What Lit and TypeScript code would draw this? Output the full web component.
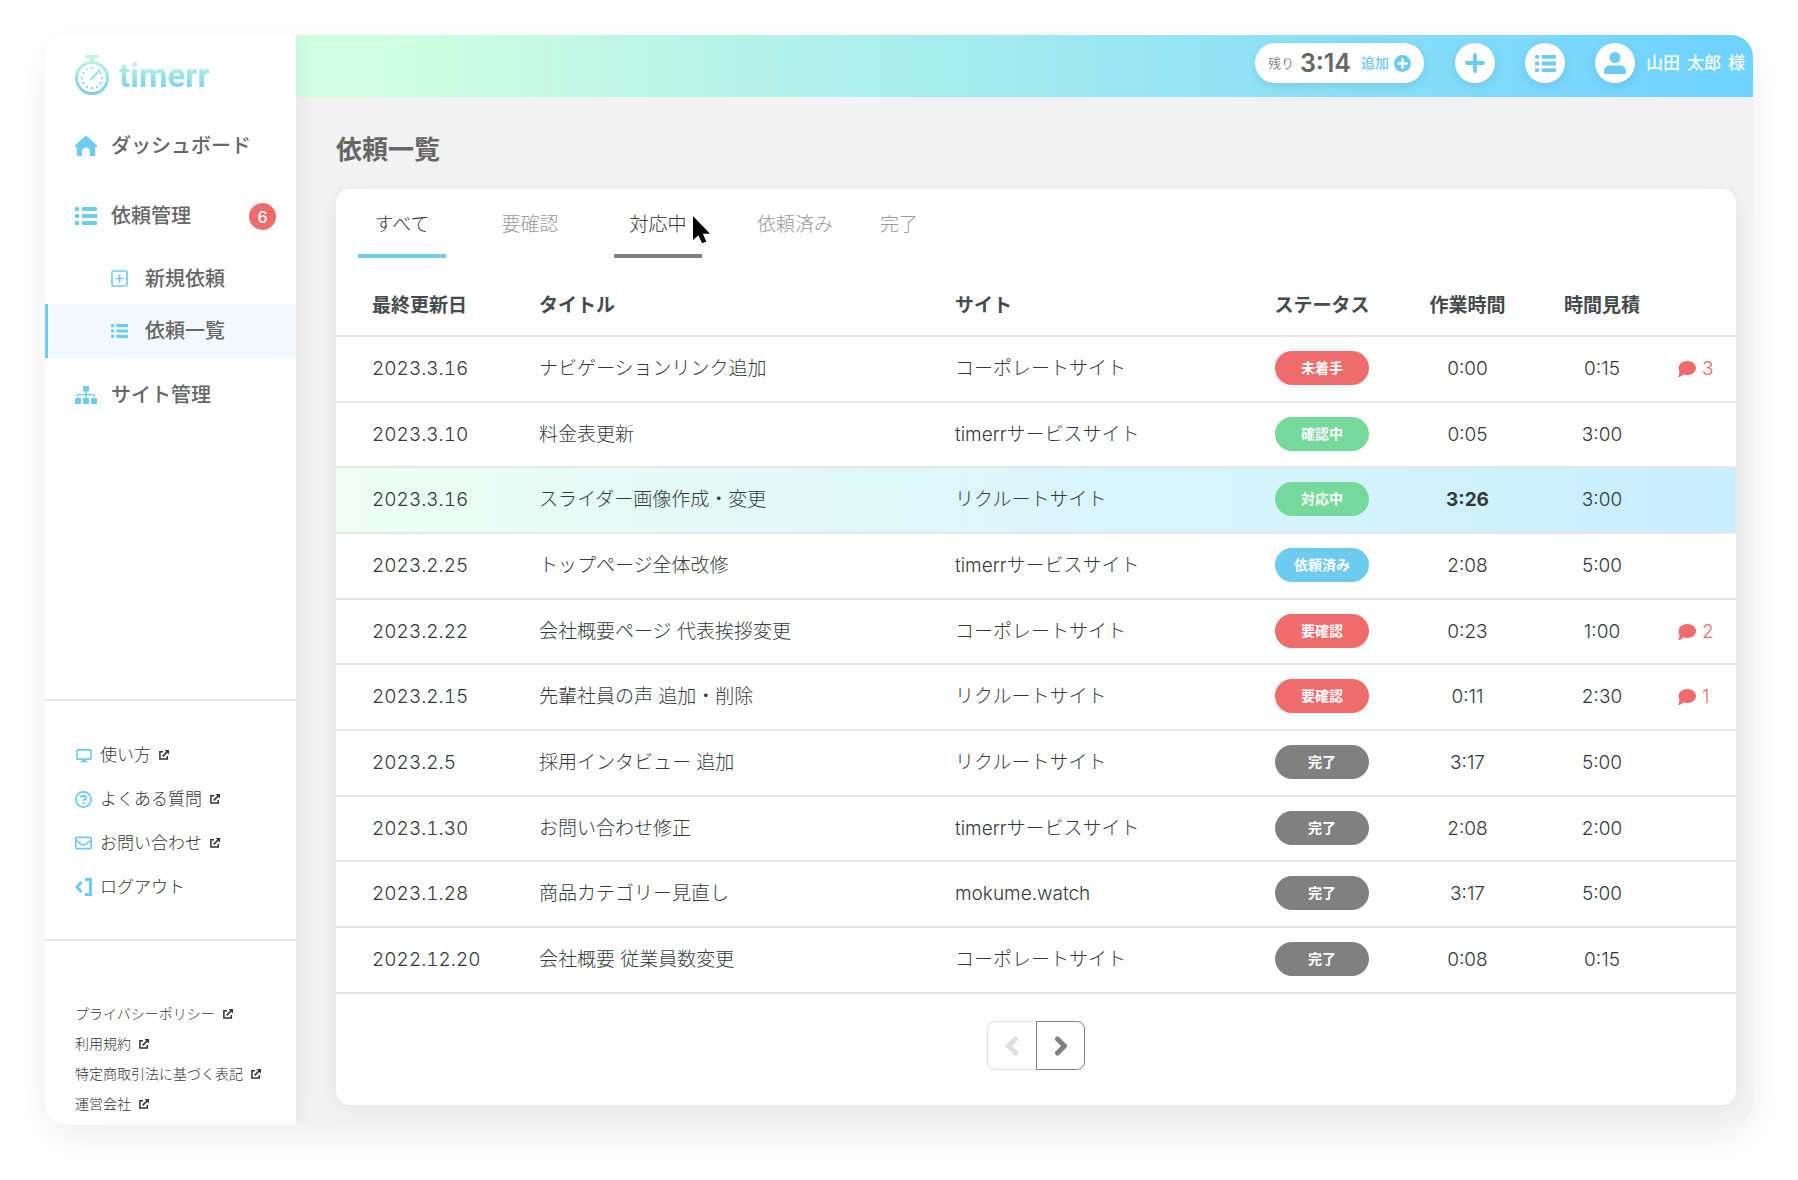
import { LitElement, html, css, svg, nothing } from "lit";
import { customElement, state } from "lit/decorators.js";
import { classMap } from "lit/directives/class-map.js";

type Tone = "red" | "green" | "blue" | "gray";

interface Task {
  date: string;
  title: string;
  site: string;
  status: string;
  tone: Tone;
  spent: string;
  estimate: string;
  comments?: number;
  active?: boolean;
}

const tasks: Task[] = [
  { date: "2023.3.16", title: "ナビゲーションリンク追加", site: "コーポレートサイト", status: "未着手", tone: "red", spent: "0:00", estimate: "0:15", comments: 3 },
  { date: "2023.3.10", title: "料金表更新", site: "timerrサービスサイト", status: "確認中", tone: "green", spent: "0:05", estimate: "3:00" },
  { date: "2023.3.16", title: "スライダー画像作成・変更", site: "リクルートサイト", status: "対応中", tone: "green", spent: "3:26", estimate: "3:00", active: true },
  { date: "2023.2.25", title: "トップページ全体改修", site: "timerrサービスサイト", status: "依頼済み", tone: "blue", spent: "2:08", estimate: "5:00" },
  { date: "2023.2.22", title: "会社概要ページ 代表挨拶変更", site: "コーポレートサイト", status: "要確認", tone: "red", spent: "0:23", estimate: "1:00", comments: 2 },
  { date: "2023.2.15", title: "先輩社員の声 追加・削除", site: "リクルートサイト", status: "要確認", tone: "red", spent: "0:11", estimate: "2:30", comments: 1 },
  { date: "2023.2.5", title: "採用インタビュー 追加", site: "リクルートサイト", status: "完了", tone: "gray", spent: "3:17", estimate: "5:00" },
  { date: "2023.1.30", title: "お問い合わせ修正", site: "timerrサービスサイト", status: "完了", tone: "gray", spent: "2:08", estimate: "2:00" },
  { date: "2023.1.28", title: "商品カテゴリー見直し", site: "mokume.watch", status: "完了", tone: "gray", spent: "3:17", estimate: "5:00" },
  { date: "2022.12.20", title: "会社概要 従業員数変更", site: "コーポレートサイト", status: "完了", tone: "gray", spent: "0:08", estimate: "0:15" },
];

const tabs = ["すべて", "要確認", "対応中", "依頼済み", "完了"];

const icon = (w: number, h: number, body: unknown, box = `0 0 ${w} ${h}`) => html`
  <svg width=${w} height=${h} viewBox=${box} fill="currentColor" aria-hidden="true">${body}</svg>
`;

const listShape = svg`
  <rect x="0" y="0" width="4" height="4" rx="0.6"/><rect x="7" y="0" width="15" height="4" rx="0.8"/>
  <rect x="0" y="7" width="4" height="4" rx="0.6"/><rect x="7" y="7" width="15" height="4" rx="0.8"/>
  <rect x="0" y="14" width="4" height="4" rx="0.6"/><rect x="7" y="14" width="15" height="4" rx="0.8"/>`;

const homeIcon = icon(22, 20, svg`
  <path d="M11 0c.5 0 .9.2 1.2.5l9.3 8.6c1 .9.5 1.900-.5 1.900h-.8V19c0 .6-.4 1-1 1h-3.500c-.5 0-.8-.3-.8-.8v-3.900c0-2.200-1.700-3.800-3.900-3.800s-3.900 1.600-3.900 3.800v3.900c0 .5-.3.8-.8.8H2.800c-.6 0-1-.4-1-1v-8H1C0 11-.5 10 .5 9.100L9.800.5C10.100.2 10.500 0 11 0z"/>`);
const listIcon = icon(22, 18, listShape);
const smallListIcon = icon(17, 14, listShape, "0 0 22 18");
const roundListIcon = icon(21, 17, listShape, "0 0 22 18");
const newIcon = icon(17, 17, svg`
  <rect x="1" y="1" width="15" height="15" rx="1.500" fill="none" stroke="currentColor" stroke-width="1.600"/>
  <path d="M8.500 4.500v8M4.500 8.500h8" stroke="currentColor" stroke-width="1.700"/>`);
const sitemapIcon = icon(22, 18, svg`
  <rect x="8" y="0" width="6" height="5.500" rx="0.800"/>
  <rect x="0" y="12" width="6" height="6" rx="1"/><rect x="8" y="12" width="6" height="6" rx="1"/><rect x="16" y="12" width="6" height="6" rx="1"/>
  <path d="M11 5v7M2.500 11V9.600c0-.6.4-1 1-1h15c.6 0 1 .4 1 1V11" fill="none" stroke="currentColor" stroke-width="1.400"/>`);
const monitorIcon = icon(17, 15, svg`
  <rect x="2" y="1.800" width="14" height="9.400" rx="1" fill="none" stroke="currentColor" stroke-width="1.700"/>
  <path d="M7.400 11.500h3.200l.5 1.800h1.500v1h-7.200v-1h1.500z"/>`);
const questionIcon = icon(17, 17, svg`
  <circle cx="8.500" cy="8.500" r="7.600" fill="none" stroke="currentColor" stroke-width="1.700"/>
  <path d="M6.100 6.700c.1-1.200 1.100-1.900 2.400-1.900 1.400 0 2.400.8 2.400 1.900 0 1.700-2.300 1.600-2.300 3.100" fill="none" stroke="currentColor" stroke-width="2"/>
  <rect x="7.600" y="11" width="2" height="2" rx="0.600"/>`);
const mailIcon = icon(17, 14, svg`
  <rect x="0.900" y="1.400" width="15.200" height="11.200" rx="1.200" fill="none" stroke="currentColor" stroke-width="1.700"/>
  <path d="M1.200 4.500l5.500 4.200c1.100.8 2.500.8 3.600 0l5.500-4.200" fill="none" stroke="currentColor" stroke-width="1.600"/>`);
const logoutIcon = icon(17, 18, svg`
  <path d="M6.500 4L2 9l4.500 5" fill="none" stroke="currentColor" stroke-width="3"/>
  <path d="M10 1.500h5.500v15H10" fill="none" stroke="currentColor" stroke-width="3"/>`);
const externalIcon = icon(10, 10, svg`
  <path d="M4 1.700H.9v7.400h7.400V6" fill="none" stroke="currentColor" stroke-width="1.500"/>
  <path d="M3.700 6.300L8 2" stroke="currentColor" stroke-width="1.700"/><path d="M5.600 0H10v4.400z"/>`);
const plusCircleIcon = icon(17, 17, svg`
  <circle cx="8.500" cy="8.500" r="8.500"/><path d="M8.500 4.500v8M4.500 8.500h8" stroke="#fff" stroke-width="2.600" stroke-linecap="round"/>`);
const plusIcon = icon(20, 20, svg`
  <path d="M10 2v16M2 10h16" stroke="currentColor" stroke-width="3.800" stroke-linecap="round"/>`);
const userIcon = icon(22, 22, svg`
  <circle cx="11" cy="5.500" r="5.500"/><path d="M5.500 13.500h11c3 0 5.500 2.400 5.500 5.800v1.200c0 .9-.6 1.500-1.500 1.500h-19C.6 22 0 21.400 0 20.500v-1.200c0-3.400 2.500-5.800 5.500-5.800z"/>`);
const commentIcon = icon(18, 16, svg`
  <path d="M9.300 0C14.200 0 18 3.100 18 7s-3.800 7-8.700 7c-1.500 0-2.900-.3-4.100-.8C4 15 2.200 16 .6 16c-.6 0-.8-.6-.4-1 .8-.8 1.300-2 1.300-3.500C.9 10.200.6 8.700.6 7 .6 3.100 4.400 0 9.300 0z"/>`);
const chevron = (d: string) => icon(14, 20, svg`
  <path d=${d} fill="none" stroke="currentColor" stroke-width="5" stroke-linecap="round" stroke-linejoin="round"/>`);

const stopwatch = html`
  <svg width="34" height="40" viewBox="0 0 34 40" aria-hidden="true">
    <defs>
      <linearGradient id="fade" gradientUnits="userSpaceOnUse" x1="0" y1="0" x2="0" y2="40">
        <stop offset="0" stop-color="#c3f8de" /><stop offset="1" stop-color="#74cdee" />
      </linearGradient>
    </defs>
    <path d="M10 0h14v3.200h-5V7h-4V3.200h-5z" fill="url(#fade)" />
    <circle cx="17" cy="23" r="15.500" fill="none" stroke="url(#fade)" stroke-width="3" />
    <path d="M16.200 24L25 14.800" stroke="url(#fade)" stroke-width="2.200" stroke-linecap="round" />
    ${[...Array(12).keys()].filter((n) => n !== 1).map((n) => {
      const a = (n * Math.PI) / 6;
      return svg`<circle cx=${17 + 10 * Math.sin(a)} cy=${23 - 10 * Math.cos(a)} r="1.200" fill="url(#fade)"/>`;
    })}
  </svg>
`;

@customElement("app-root")
export class AppRoot extends LitElement {
  @state() private selected = 0;

  static styles = css`
    :host {
      --blue: #6ccbee;
      --red: #ee6c6c;
      --line: #e7e7e7;
      display: block;
      box-sizing: border-box;
      min-height: 100vh;
      padding: 35px 45px 55px;
      background: #fff;
      color: #454b4d;
      font: 400 19px/28px Inter, "Noto Sans CJK JP", sans-serif;
    }
    *, *::before, *::after { box-sizing: border-box; }
    svg { display: block; flex: none; }
    a { color: inherit; text-decoration: none; }
    button { font: inherit; color: inherit; background: none; border: 0; padding: 0; cursor: pointer; }
    ul { list-style: none; margin: 0; padding: 0; }

    .frame {
      display: grid;
      grid-template-columns: 251px minmax(0, 1fr);
      border-radius: 22px;
      overflow: hidden;
      background: #f2f2f2;
      box-shadow: 0 12px 44px rgba(0, 0, 0, 0.07);
    }

    .side {
      position: relative;
      display: flex;
      flex-direction: column;
      background: #fff;
      box-shadow: 0 0 24px rgba(0, 0, 0, 0.08);
    }
    .logo { display: flex; gap: 10px; padding: 20px 30px 0; height: 78px; }
    .word {
      height: 42px;
      font: 700 33px/42px Roboto, "Liberation Sans", sans-serif;
      background: linear-gradient(#c3f8de 15%, #74cdee 85%);
      -webkit-background-clip: text;
      background-clip: text;
      color: transparent;
    }
    .main-nav { color: #666; font-size: 20px; font-weight: 500; margin-bottom: auto; }
    .main-nav a { display: flex; align-items: center; gap: 14px; padding: 0 20px 0 30px; height: 66px; }
    .main-nav svg, .help svg:first-child { color: var(--blue); }
    .main-nav .manage { height: 74px; }
    .main-nav .child { height: 51px; padding-left: 66px; gap: 17px; }
    .main-nav .current { height: 54px; background: #f2faff; border-left: 3px solid var(--blue); padding-left: 63px; }
    .main-nav .sites { height: 74px; }
    .count {
      display: grid;
      place-items: center;
      width: 27px;
      height: 27px;
      margin-left: auto;
      border-radius: 50%;
      background: var(--red);
      color: #fff;
      font-size: 16px;
    }
    .help { border-top: 2px solid var(--line); padding: 32px 30px 30px; font-size: 17px; color: #333; }
    .help a { display: flex; align-items: center; gap: 8px; height: 44px; }
    .legal { border-top: 2px solid var(--line); padding: 58px 30px 6px; font-size: 14px; color: #333; }
    .legal a { display: flex; align-items: center; gap: 8px; height: 30px; }
    .help, .legal, .tab, td, .remain { font-weight: 300; }

    .body { display: flex; flex-direction: column; min-width: 0; }
    .top {
      display: flex;
      align-items: center;
      justify-content: flex-end;
      height: 62px;
      padding: 0 8px 6px 0;
      background: linear-gradient(90deg, #d0ffe0 5%, #6fd3ff 97%);
    }
    .remain {
      display: flex;
      align-items: center;
      height: 40px;
      padding: 0 13px;
      margin-right: 31px;
      border-radius: 20px;
      background: #fff;
      box-shadow: 0 3px 10px rgba(0, 60, 90, 0.12);
      color: #555;
      font-size: 13px;
    }
    .remain strong { margin: 0 10px 0 6px; font-size: 25px; font-weight: 600; color: #666; }
    .remain button { display: flex; align-items: center; gap: 5px; color: var(--blue); font-size: 14px; font-weight: 500; }
    .round {
      display: grid;
      place-items: center;
      width: 40px;
      height: 40px;
      border-radius: 50%;
      background: #fff;
      color: var(--blue);
      box-shadow: 0 3px 10px rgba(0, 60, 90, 0.12);
      margin-right: 30px;
    }
    .account { display: flex; align-items: center; gap: 11px; color: #fff; font-size: 17px; font-weight: 500; }
    .account .round { margin: 0; }
    .name { display: flex; gap: 7px; }

    h1 { margin: 0; padding: 38px 40px 24px; color: #666; font-size: 26px; line-height: 30px; font-weight: 700; }
    .card {
      margin: 0 17px 20px 40px;
      border-radius: 14px;
      background: #fff;
      box-shadow: 0 4px 24px rgba(0, 0, 0, 0.06);
    }
    .tabs { display: flex; padding-left: 22px; }
    .tab {
      position: relative;
      height: 69px;
      min-width: 88px;
      margin-right: 40px;
      padding: 6px 15px 0;
      border-bottom: 4px solid transparent;
      color: #999;
    }
    .tab.wide { margin-right: 17px; }
    .tab.narrow { min-width: 68px; }
    .tab.on { color: #333; border-color: var(--blue); }
    .tab.hover { color: #333; border-color: #808080; }
    .pointer { position: absolute; left: 78px; top: 26px; }

    table { width: 100%; border-collapse: separate; border-spacing: 0; table-layout: fixed; }
    th, td { padding: 0; text-align: left; border-bottom: 2px solid var(--line); white-space: nowrap; }
    th { height: 79px; padding-top: 18px; font-weight: 700; }
    td { height: 66px; color: #33393b; }
    tr:nth-child(3n + 2) td { height: 65px; }
    th:first-child, td:first-child { padding-left: 36px; }
    .date { font-variant-numeric: tabular-nums; }
    .c-date { width: 203px; }
    .c-site { width: 295px; }
    .c-status { width: 144px; }
    .c-spent { width: 147px; }
    .c-est { width: 122px; }
    .c-com { width: 73px; }
    th.mid, td.mid { text-align: center; }
    .active { background: linear-gradient(90deg, #edfff4, #c8edff); }
    .active .spent { font-weight: 700; }
    td.status { padding-bottom: 2px; }
    .pill {
      display: block;
      width: 94px;
      margin: 0 auto;
      border-radius: 17px;
      color: #fff;
      font-size: 14px;
      line-height: 34px;
      font-weight: 700;
    }
    .red { background: var(--red); }
    .green { background: #74d99b; }
    .blue { background: var(--blue); }
    .gray { background: #808080; }
    .comments { display: flex; align-items: center; gap: 6px; padding-left: 15px; color: var(--red); }

    .pager { display: flex; justify-content: center; padding: 27px 0 35px; }
    .pager button { display: grid; place-items: center; width: 49px; height: 49px; }
    .pager .prev { color: #dedede; border: 1px solid #e0e0e0; border-right: 0; border-radius: 8px 0 0 8px; }
    .pager .next { color: #808080; border: 1px solid #808080; border-radius: 0 8px 8px 0; }
  `;

  private legalLink(label: string) {
    return html`<li><a href="#">${label}${externalIcon}</a></li>`;
  }

  private sidebar() {
    return html`
      <aside class="side">
        <a class="logo" href="#">${stopwatch}<span class="word">timerr</span></a>
        <nav class="main-nav">
          <a href="#">${homeIcon}ダッシュボード</a>
          <a class="manage" href="#">${listIcon}依頼管理<span class="count">6</span></a>
          <a class="child" href="#">${newIcon}新規依頼</a>
          <a class="child current" href="#" aria-current="page">${smallListIcon}依頼一覧</a>
          <a class="sites" href="#">${sitemapIcon}サイト管理</a>
        </nav>
        <ul class="help">
          <li><a href="#">${monitorIcon}使い方${externalIcon}</a></li>
          <li><a href="#">${questionIcon}よくある質問${externalIcon}</a></li>
          <li><a href="#">${mailIcon}お問い合わせ${externalIcon}</a></li>
          <li><a href="#">${logoutIcon}ログアウト</a></li>
        </ul>
        <ul class="legal">
          ${["プライバシーポリシー", "利用規約", "特定商取引法に基づく表記", "運営会社"].map((l) => this.legalLink(l))}
        </ul>
      </aside>
    `;
  }

  private row(t: Task) {
    return html`
      <tr class=${classMap({ active: !!t.active })}>
        <td class="date">${t.date}</td>
        <td>${t.title}</td>
        <td>${t.site}</td>
        <td class="mid status"><span class="pill ${t.tone}">${t.status}</span></td>
        <td class="mid spent">${t.spent}</td>
        <td class="mid">${t.estimate}</td>
        <td>${t.comments ? html`<a class="comments" href="#">${commentIcon}${t.comments}</a>` : nothing}</td>
      </tr>
    `;
  }

  render() {
    return html`
      <div class="frame">
        ${this.sidebar()}
        <div class="body">
          <header class="top">
            <div class="remain">
              <span>残り</span><strong>3:14</strong>
              <button>追加${plusCircleIcon}</button>
            </div>
            <button class="round" aria-label="新規依頼">${plusIcon}</button>
            <button class="round" aria-label="依頼一覧">${roundListIcon}</button>
            <a class="account" href="#">
              <span class="round">${userIcon}</span>
              <span class="name"><span>山田</span> <span>太郎</span> <span>様</span></span>
            </a>
          </header>
          <main>
            <h1>依頼一覧</h1>
            <section class="card">
              <div class="tabs" role="tablist">
                ${tabs.map((label, i) => html`
                  <button
                    role="tab"
                    aria-selected=${i === this.selected}
                    class=${classMap({ tab: true, on: i === this.selected, hover: i === 2 && i !== this.selected, wide: i === 3, narrow: i === 4 })}
                    @click=${() => (this.selected = i)}
                  >${label}${i === 2 ? html`
                    <svg class="pointer" width="19" height="29" viewBox="0 0 19 29" aria-hidden="true">
                      <path d="M1 1v24l5.400-4.700L10 28.200l4.300-1.800-3.500-7.700H18z" fill="#000" />
                    </svg>` : nothing}</button>
                `)}
              </div>
              <table>
                <colgroup>
                  <col class="c-date"><col><col class="c-site"><col class="c-status"><col class="c-spent"><col class="c-est"><col class="c-com">
                </colgroup>
                <thead>
                  <tr>
                    <th>最終更新日</th><th>タイトル</th><th>サイト</th><th class="mid">ステータス</th>
                    <th class="mid">作業時間</th><th class="mid">時間見積</th><th aria-label="コメント"></th>
                  </tr>
                </thead>
                <tbody>${tasks.map((t) => this.row(t))}</tbody>
              </table>
              <div class="pager">
                <button class="prev" aria-label="前へ" disabled>${chevron("M10.500 3L3.500 10l7 7")}</button>
                <button class="next" aria-label="次へ">${chevron("M3.500 3l7 7-7 7")}</button>
              </div>
            </section>
          </main>
        </div>
      </div>
    `;
  }
}
